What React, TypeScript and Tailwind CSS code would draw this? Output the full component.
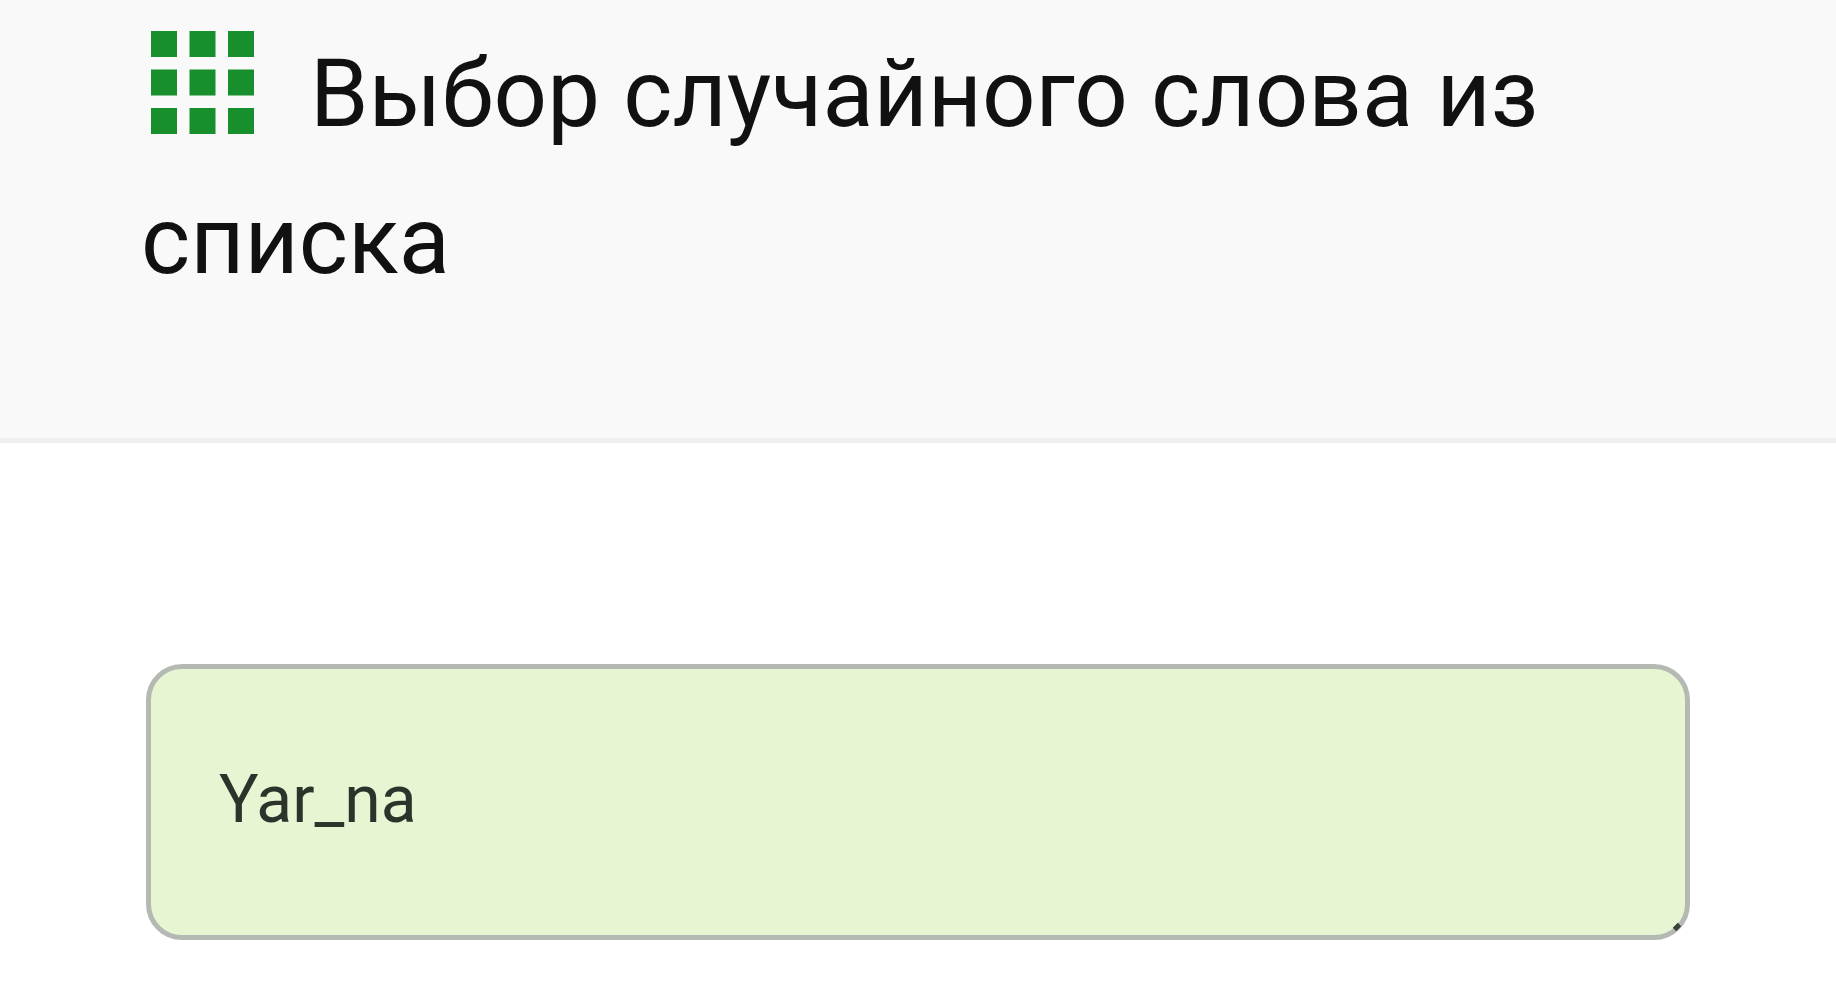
const dots = [0, 1, 2, 3, 4, 5, 6, 7, 8];

const GridIcon = () => (
  <svg viewBox="0 0 103 103" className="mr-14 ml-[10px] inline-block size-[103px] align-[-8px]" aria-hidden="true">
    {dots.map((i) => (
      <rect key={i} x={(i % 3) * 38.5} y={Math.floor(i / 3) * 38.5} width="26" height="26" fill="#178f2d" />
    ))}
  </svg>
);

export default function App() {
  return (
    <div className="min-h-screen bg-white font-[Roboto,sans-serif]">
      <header className="border-b-5 border-[#eeeeee] bg-[#f9f9f9] px-[141px] pt-[21px] pb-[123px]">
        <h1 className="text-[94px] leading-[147px] text-[#111111]">
          <GridIcon />
          Выбор случайного слова из списка
        </h1>
      </header>

      <main className="px-[146px] pt-[221px]">
        <div className="relative">
          <textarea
            aria-label="Список слов"
            defaultValue="Yar_na"
            rows={1}
            className="block h-[276px] w-full resize-none rounded-[36px] border-5 border-[#b5b9b3] bg-[#e7f5d2] px-[68px] py-[89px] text-[66px] leading-[84px] text-[#2b332b] outline-none"
          />
          {/* Resize grip */}
          <svg viewBox="0 0 10 10" className="pointer-events-none absolute right-2 bottom-2 size-[10px]" aria-hidden="true">
            <path d="M2.5 7.5L7.5 2.5" stroke="#3c4238" strokeWidth="5" />
          </svg>
        </div>
      </main>
    </div>
  );
}
